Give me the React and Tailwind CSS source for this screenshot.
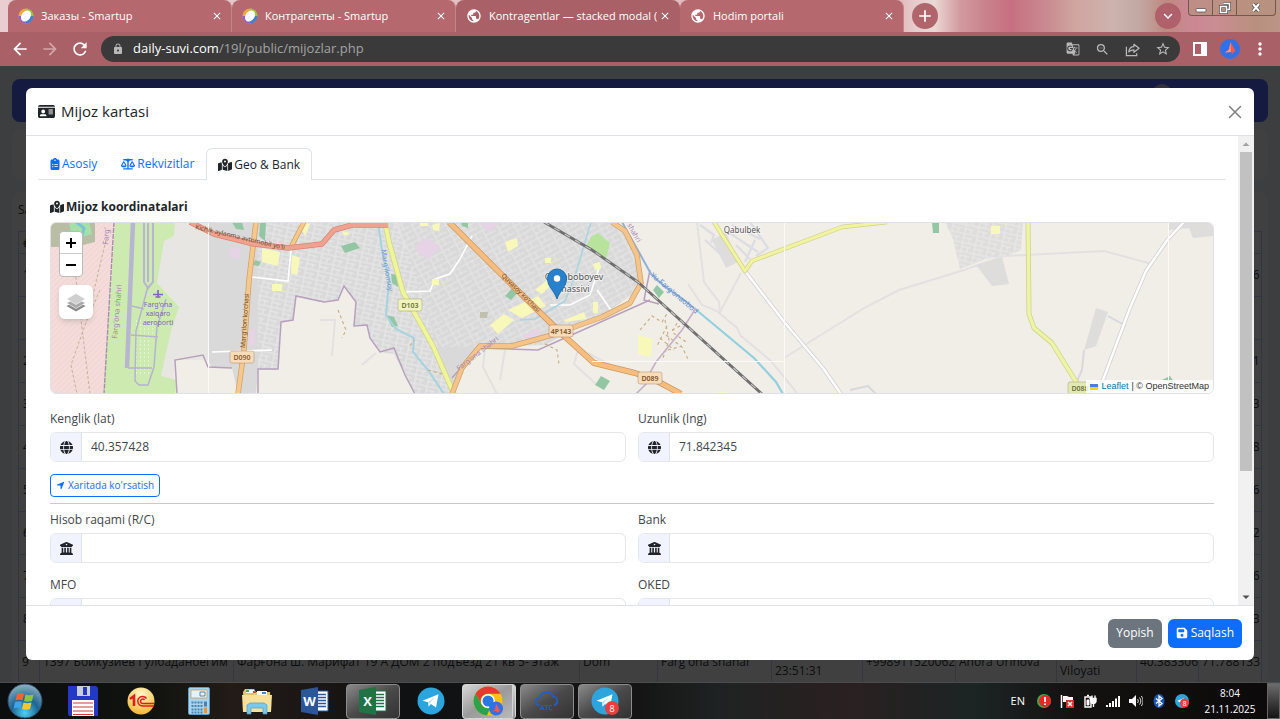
import { useState } from 'react'
import {
  FaIdCard,
  FaClipboardList,
  FaScaleBalanced,
  FaMapLocationDot,
  FaGlobe,
  FaBuildingColumns,
  FaLocationArrow,
  FaFloppyDisk
} from 'react-icons/fa6'
import {
  MdArrowBack,
  MdArrowForward,
  MdRefresh,
  MdLock,
  MdGTranslate,
  MdZoomOut,
  MdStarBorder,
  MdPublic,
  MdClose,
  MdAdd,
  MdExpandMore,
  MdMoreVert
} from 'react-icons/md'

const browserTabs = [
  { title: 'Заказы - Smartup', icon: 'smartup' },
  { title: 'Контрагенты - Smartup', icon: 'smartup' },
  { title: 'Kontragentlar — stacked modal (', icon: 'globe', active: true },
  { title: 'Hodim portali', icon: 'globe' }
]

const cardTabs = [
  { id: 'asosiy', label: 'Asosiy', Icon: FaClipboardList },
  { id: 'rekvizitlar', label: 'Rekvizitlar', Icon: FaScaleBalanced },
  { id: 'geo', label: 'Geo & Bank', Icon: FaMapLocationDot }
]

const rows = [
  { no: '1', lng: '71.788136' },
  { no: '', lng: '' },
  { no: '2', lng: '71.788131' },
  { no: '3', lng: '71.788133' },
  { no: '4', lng: '71.788138' },
  { no: '5', lng: '71.788136' },
  { no: '6', lng: '71.788132' },
  { no: '7', lng: '71.788136' },
  { no: '8', lng: '71.788133' }
]

function SmartupIcon() {
  return (
    <svg viewBox="0 0 16 16" className="size-4 shrink-0">
      <circle cx="8" cy="8" r="7.5" fill="#f3a93c" />
      <path d="M8 .5a7.5 7.5 0 0 1 7.5 7.5L8 8z" fill="#9bc53d" />
      <path d="M15.500 8A7.500 7.500 0 0 1 8 15.500L8 8z" fill="#3f7fd0" />
      <path d="M8 15.500A7.500 7.500 0 0 1 .5 8L8 8z" fill="#8c62c4" />
      <ellipse cx="8" cy="8" rx="4.500" ry="6" fill="#fff" transform="rotate(35 8 8)" />
    </svg>
  )
}

function BrowserTab({ tab }) {
  return (
    <div
      className={
        tab.active
          ? 'flex w-56 min-w-0 items-center rounded-t-lg bg-[#a96067] pr-[9px] pl-[10px]'
          : 'flex w-56 min-w-0 items-center rounded-t-lg border-r border-[#c48589] bg-[#b5686e] pr-2 pl-[10px]'
      }
    >
      {tab.icon === 'smartup' ? <SmartupIcon /> : <MdPublic className="size-4 shrink-0 text-white" />}
      <span className="ml-[7px] min-w-0 flex-1 overflow-hidden whitespace-nowrap text-[11px] text-white">{tab.title}</span>
      <button type="button" aria-label="Close tab" className="text-white">
        <MdClose className="size-3" />
      </button>
    </div>
  )
}

function WindowControls() {
  return (
    <div className="flex h-4 self-start rounded-b border border-t-0 border-[#6f5a52] bg-[#b8917f]/70">
      <button type="button" aria-label="Minimize" className="flex w-6 items-center justify-center border-r border-[#6f5a52]">
        <svg viewBox="0 0 12 12" className="size-3">
          <rect x="1" y="6.500" width="10" height="3.500" rx="1" fill="#fff" stroke="#555" strokeWidth=".8" />
        </svg>
      </button>
      <button type="button" aria-label="Restore" className="flex w-6 items-center justify-center border-r border-[#6f5a52]">
        <svg viewBox="0 0 12 12" className="size-3" fill="none">
          <path d="M4.500 1.500h6v6h-2M1.500 4.500h6v6h-6z" stroke="#555" strokeWidth="3" />
          <path d="M4.500 1.500h6v6h-2M1.500 4.500h6v6h-6z" stroke="#fff" strokeWidth="1.500" />
        </svg>
      </button>
      <button type="button" aria-label="Close window" className="flex w-[38px] items-center justify-center">
        <svg viewBox="0 0 12 12" className="size-3" fill="none">
          <path d="M3 2l6 7M9 2L3 9" stroke="#555" strokeWidth="3.500" />
          <path d="M3 2l6 7M9 2L3 9" stroke="#fff" strokeWidth="2" />
        </svg>
      </button>
    </div>
  )
}

function BrowserChrome() {
  return (
    <header className="shrink-0">
      <div className="flex h-8 bg-[linear-gradient(90deg,#e9cdd0_0%,#e2b5b9_70%,#e6cccb_71.500%,#ead9d4_73%,#d39a9f_75%,#c9828c_77%,#c76f80_79%,#c98d92_82%,#d0a5a0_84%,#cdb3ae_87%,#c2a8a3_89%,#bd8a80_91%,#cc8794_93%,#c98d92_95%,#b9907f_98%,#bb9585_100%)] pl-2">
        {browserTabs.map((tab) => (
          <BrowserTab key={tab.title} tab={tab} />
        ))}
        <button
          type="button"
          aria-label="New tab"
          className="ml-2 flex size-[26px] shrink-0 items-center justify-center self-center rounded-full bg-[#b0656c] text-white"
        >
          <MdAdd className="size-5" />
        </button>
        <button
          type="button"
          aria-label="Search tabs"
          className="mr-[7px] ml-auto flex size-[26px] shrink-0 items-center justify-center self-center rounded-full bg-[#b0606a] text-white"
        >
          <MdExpandMore className="size-[18px]" />
        </button>
        <div className="mr-1">
          <WindowControls />
        </div>
      </div>

      <div className="flex h-[34px] items-center bg-[#a96067] px-[10px] text-white">
        <button type="button" aria-label="Back" className="mr-[10px]">
          <MdArrowBack className="size-5" />
        </button>
        <button type="button" aria-label="Forward" className="mr-[10px] text-[#d3a5a8]">
          <MdArrowForward className="size-5" />
        </button>
        <button type="button" aria-label="Reload" className="mr-[11px]">
          <MdRefresh className="size-5" />
        </button>
        <div className="flex h-[26px] min-w-0 flex-1 items-center gap-[15px] rounded-full bg-[#3a3a3a] pr-[9px] pl-[11px] text-[#b9b9b9]">
          <MdLock className="size-3 shrink-0" />
          <p className="-ml-[6px] min-w-0 flex-1 truncate text-[13px] text-[#a3a3a3]">
            <span className="text-white">daily-suvi.com</span>/19l/public/mijozlar.php
          </p>
          <MdGTranslate className="size-[14px] shrink-0" />
          <MdZoomOut className="size-[15px] shrink-0" />
          <svg viewBox="0 0 16 16" className="size-[15px] shrink-0" fill="none" stroke="currentColor" strokeWidth="1.300">
            <path d="M1.500 5v9.500h11V12" />
            <path d="M4 10.500c.5-4 2.500-5.500 5.500-5.500V2.500L15 6.700 9.500 11V8.300C7 8.300 5.500 9 4 10.500z" strokeLinejoin="round" />
          </svg>
          <MdStarBorder className="size-4 shrink-0" />
        </div>
        <button type="button" aria-label="Side panel" className="ml-[13px]">
          <svg viewBox="0 0 14 14" className="size-[14px]">
            <path d="M0 0h14v14H0zM2 2v10h6V2z" fill="#fff" fillRule="evenodd" />
          </svg>
        </button>
        <button type="button" aria-label="Profile" className="ml-[13px]">
          <svg viewBox="0 0 20 20" className="size-5">
            <circle cx="10" cy="10" r="10" fill="#3070e8" />
            <path d="M10.500 3l5 8.500-3.500 3.500-1-2-6 .5 4-3z" fill="#f0594e" />
            <path d="M10.500 3l.5 10-6 .5 4-3z" fill="#ff9484" />
          </svg>
        </button>
        <button type="button" aria-label="Menu" className="ml-[10px]">
          <MdMoreVert className="size-5" />
        </button>
      </div>
    </header>
  )
}

function ClientsPage() {
  return (
    <div className="flex h-full flex-col overflow-hidden bg-[#3d3e40] px-3 pt-[13px] text-[12px] text-[#0c0d0e]">
      <div className="flex h-[43px] shrink-0 items-start justify-end rounded-lg bg-[#141a40] px-24">
        <div className="mt-[5px] size-5 rounded-full bg-[#35313a]" />
      </div>
      <div className="mt-2 h-[50px] shrink-0 rounded-lg bg-[#404040]" />
      <div className="mt-3 shrink-0 rounded-lg bg-[#404040] px-[6px]">
        <p className="h-[39px] pt-2 leading-5">Sa</p>
        <table className="w-full table-fixed border-collapse whitespace-nowrap">
          <colgroup>
            <col className="w-[21px]" />
            <col className="w-[194px]" />
            <col />
            <col className="w-[78px]" />
            <col className="w-[114px]" />
            <col className="w-[91px]" />
            <col className="w-[93px]" />
            <col className="w-[101px]" />
            <col className="w-20" />
            <col className="w-[62px]" />
            <col className="w-[63px]" />
          </colgroup>
          <thead>
            <tr className="h-[22px] border border-[#34363f]">
              <th className="pl-1 text-left leading-4">#</th>
              <th colSpan={10}></th>
            </tr>
          </thead>
          <tbody>
            {rows.map((row, i) => (
              <tr key={i} className="h-[43px] border border-[#34363f]">
                <td className="pl-1">{row.no}</td>
                <td colSpan={9}></td>
                <td className="pl-[3px]">{row.lng}</td>
              </tr>
            ))}
            <tr className="h-[43px] border border-[#34363f] [&>td]:border [&>td]:border-[#34363f] [&>td]:px-[3px] [&>td]:py-0">
              <td>9</td>
              <td>1397 Бойкузиев Гулбаданбегим</td>
              <td>Фарғона ш. Марифат 19 А ДОМ 2 подъезд 21 кв 5- этаж</td>
              <td>Dom</td>
              <td>Farg'ona shahar</td>
              <td className="leading-[17px]">2025-11-20<br />23:51:31</td>
              <td>+998911520062</td>
              <td>Anora Urinova</td>
              <td className="leading-[17px]">Farg'ona<br />Viloyati</td>
              <td>40.383306</td>
              <td>71.788133</td>
            </tr>
          </tbody>
        </table>
      </div>
    </div>
  )
}

function RoadLabel({ x, y, text, fill, color }) {
  return (
    <g>
      <rect x={x - 12} y={y - 6} width="24" height="12" rx="2" fill={fill} stroke={color} strokeOpacity=".3" />
      <text x={x} y={y + 3} textAnchor="middle" fontSize="7" fontWeight="600" fill={color}>{text}</text>
    </g>
  )
}

function Road({ d, width, fill, edge }) {
  return (
    <g fill="none" strokeLinejoin="round">
      <path d={d} stroke={edge} strokeWidth={width + 1.5} />
      <path d={d} stroke={fill} strokeWidth={width} />
    </g>
  )
}

function MapDrawing() {
  return (
    <svg
      viewBox="51 222 1162 172"
      preserveAspectRatio="xMidYMid slice"
      className="block h-full w-full font-['Noto_Sans',sans-serif]"
      role="img"
      aria-label="Xarita"
    >
      <defs>
        <pattern id="streetsA" width="13" height="9" patternUnits="userSpaceOnUse" patternTransform="rotate(12)">
          <path d="M0 1h13M4 1v8M10 5v4M4 5h9" stroke="#ececec" strokeWidth=".9" fill="none" />
        </pattern>
        <pattern id="streetsB" width="15" height="11" patternUnits="userSpaceOnUse" patternTransform="rotate(-28)">
          <path d="M0 1h15M3 1v10M9 1v6M3 7h12" stroke="#e9e9e9" strokeWidth=".9" fill="none" />
        </pattern>
        <pattern id="hatch" width="4" height="4" patternUnits="userSpaceOnUse" patternTransform="rotate(45)">
          <path d="M0 0v4" stroke="#efd0cf" strokeWidth="1.200" />
        </pattern>
        <pattern id="apron" width="4" height="4" patternUnits="userSpaceOnUse">
          <rect width="1" height="2" fill="#e2f3d6" />
        </pattern>
        <clipPath id="cityClip">
          <path d="M208 222H612L628 238 640 270 639 290 610 310 545 345 479 347 455 380 452 394H416L405 375 394 354 380 352 370 338 367 325 354 326 356 302 344 286 338 300 320 302 296 296 293 320 281 322 278 370H258L256 394H238L232 368H212L208 360z" />
        </clipPath>
      </defs>

      <rect x="51" y="222" width="1162" height="172" fill="#f1eee8" />
      <path d="M150 222h58v138l-33 0-2 34h-20z" fill="#e8e6e2" />
      <path d="M51 222h64l-11 172H51z" fill="#f3dcda" />
      <path d="M51 222h64l-11 172H51z" fill="url(#hatch)" />
      <path d="M51 222h44v20l-20 5H51z" fill="#b9bda4" />
      <path d="M69 222h20l3 12-20 6z" fill="#a5e0a8" />
      <path d="M76 222l8 6-2 8" stroke="#7cc4d4" strokeWidth="3" fill="none" />

      {/* airport */}
      <path d="M115 222h60l-1 14-10 5-7 42 22 24-8 24-10 45 16 4-2 14h-71z" fill="#cdebb0" />
      <path d="M136 320h18l-4 54h-16z" fill="url(#apron)" />
      <path d="M133 222l-6 146" stroke="#b8b5d0" strokeWidth="4.500" />
      <path d="M144 222v60l4 6 5-6V222M148 222v60" stroke="#b8b5d0" strokeWidth="2" fill="none" />
      <path d="M148 286l-12 45-1 50 4 4h9l6-18 3-40 9-28M132 306l12 3M131 335l27 2M128 368h24" stroke="#b5b3cf" strokeWidth="1.500" fill="none" />
      <path d="M106 240L87 320l-16 45 6 29M74 262l16 132M100 290l-13 30" stroke="#c9a98d" strokeWidth=".9" strokeDasharray="3 2" fill="none" />
      <path d="M114 222l-10 172" stroke="#a98dac" strokeWidth="1.400" strokeDasharray="5 1" />
      <path d="M158 290v7M153 294.500h10M155.500 297h5" stroke="#8461c4" strokeWidth="1.600" />
      <g fill="#8461c4" fontSize="7" textAnchor="middle">
        <text x="158" y="307">Farg'ona</text>
        <text x="158" y="316">xalqaro</text>
        <text x="158" y="325">aeroporti</text>
      </g>
      <g fill="#a97fb4" fontSize="7.500">
        <text transform="translate(117 339) rotate(-85)">Farg'ona shahri</text>
        <text transform="translate(108 245) rotate(-85)">Farg'</text>
      </g>

      {/* city blocks */}
      <g clipPath="url(#cityClip)">
        <rect x="200" y="222" width="450" height="172" fill="#d9d9da" />
        <path d="M258 222h140l55 172H258z" fill="url(#streetsA)" />
        <path d="M395 222h250v125H440z" fill="url(#streetsB)" />
        <path d="M404 292l26-1 5-12 15-5 10-15 12-23M252 277l36 4 4-40M212 352l60-2M550 305h20l20-10 10-30M597 290l14 20" stroke="#fff" strokeWidth="1.600" fill="none" />
        <path d="M414 248l12-10 14 8-12 14zM230 248h10v10h-10zM250 330l5-2v16l-6 2zM523 336l14-8 4 6-12 8zM478 222h22l-10 10z" fill="#e7d3e6" />
        <path d="M262 248l18 4-2 14-16-4zM292 255l8 3-3 17-6-2zM272 284h10v7h-10zM298 222l12 2-5 12zM505 242l12-4 1 8-10 6zM535 290l12-10 3 6-8 8zM508 310l30-14 8 10-24 12zM490 325l14-11 10 6-16 14zM564 320l20-8 2 7-20 3zM593 302h5v11h-5zM593 264l7-2 1 7-6 1zM545 258h6v5h-6zM432 279h7v6h-7zM432 225l8-2-1 8-6-1zM420 222h8v4h-8zM341 231l10 2-6 3z" fill="#f8f8bb" />
        <path d="M232 222h10l2 8-8-1zM260 223h6l-1 18-6-5zM255 260l6 2-2 4-6-1zM341 246l14-4 5 6-15 5zM391 274l6 1 1 12-6-4zM386 315l8 2 4 9-6 1zM505 296l8-9 7 3-9 10zM461 222h7v6l-6-2z" fill="#93c7a4" />
        <path d="M592 236l6-3 12 10-4 16-20-13z" fill="#b8e39c" />
        <path d="M480 312h8l-1 6h-7z" fill="#c0c0ae" />
      </g>
      <path d="M177 394l-2-34 28-5 5 12 24 1M258 394V369h20l3-47 12-2 3-24 28 6 14-2 6-14 12 16-2 24 13-1 3 13 10 14 14-4 11 27 10 19M452 378l26-30 60 2 112-50M650 270l-6 30 15 4" stroke="#b8a0bd" strokeWidth="1.500" fill="none" />

      {/* water */}
      <path d="M378 222l4 28 7 30-3 35 10 14 18 9-1 14 15 18 16 24" stroke="#a5d3df" strokeWidth="2" fill="none" />
      <path d="M591 222l-16 54-10 25-30 18-15 1" stroke="#a9d5e0" strokeWidth="1.600" fill="none" />
      <path d="M622 222l18 32 11 20 13 12 20 14 10 8" stroke="#8fb0d8" strokeWidth="2" fill="none" />
      <path d="M694 308l60 50 22 24 7 12" stroke="#92cfe0" strokeWidth="2.200" fill="none" />
      <text transform="translate(650 276) rotate(40)" fill="#5d8dc9" fontSize="7.500">Yu.Farg'onaobod</text>
      <text transform="translate(381 250) rotate(80)" fill="#6f97cf" fontSize="7">Marg'ilonsoy</text>

      {/* fields and minor roads */}
      <g fill="none" stroke="#e3e0e2" strokeWidth="2">
        <path d="M697 222l7 60 15 20 1 10 21-39M688 284l14 21 15 6 20 17 4 8 30 25 26 32M784 358l80-50 35-18 65-20 40-14 100-5 48 13M320 320h15l-3 36M362 365l14-12M485 347l-2 20 14 27M505 350l-5 30M578 350l-4 14 22 20M588 353l22 12" />
      </g>
      <g fill="#dedddc">
        <path d="M945 222h78l-2 28-16 6-20 3-25 10-7-30zM976 265l26-8 7 27-17 2zM1084 350l12-42 12 4-12 34zM1168 222h45v14l-20 2-4-10-20 2zM712 240l14-8 12 30-12 6z" />
      </g>
      <path d="M945 222h78l-2 28-16 6-20 3-25 10-7-30z" fill="url(#streetsA)" />
      <path d="M732 225l28 14M728 232l30 20M736 245l14 14M750 222l18 26-12 8M745 262l10-22M700 225l14 10-3 8M705 240l20 18" stroke="#dcdce2" strokeWidth="2.200" fill="none" />
      <path d="M1108 316l18 10M1084 350l-2 20-8 18M850 390l18-4 8 8" stroke="#d8d7dc" strokeWidth="2" fill="none" />
      <path d="M932 223h7v10h-6zM653 290l4-5 7 7-5 6zM595 385l6-9 9 5-6 9zM1162 380l8-4 4 6z" fill="#93c7a4" />
      <path d="M991 226h9v8h-9zM638 335l15 4-2 18-13-3zM835 388h5v6h-5zM718 392h6v2h-6z" fill="#f8f8bb" />
      <g fill="none" stroke="#c8aa7c" strokeWidth="1.100" strokeDasharray="3 3">
        <path d="M545 344l12 6 2 14M338 310l8 20-4 8M410 346l4-6M428 370l14 4M640 330l12-14 10 6 6-10M665 320l4 20-6 18M666 335l16 12 6 12M672 330l12-6M668 350l14-4M667 326l-10 20M680 318l-8 14 14 10M660 338l14 12" />
      </g>
      <path d="M696 308l-14 22-26 32-9 16M650 380l-14 14" stroke="#c7b0c8" strokeWidth="1.600" fill="none" />

      {/* roads */}
      <Road d="M745 271l40 52 38 45 18 26" width={2.5} fill="#fdfdfd" edge="#d0cfd2" />
      <Road d="M1184 222l-16 17-22 32-16 37-30 80" width={2.5} fill="#fdfdfd" edge="#d0cfd2" />
      <Road d="M714 222l31 49 7-10 90-34 45-5" width={3} fill="#f1f3a0" edge="#d0d486" />
      <Road d="M1028 222l1 92 5 14 18 15 26 42" width={3.5} fill="#eef3a5" edge="#ccd48c" />
      <Road d="M385 222l4 20 14 50 30 54 21 48" width={4} fill="#f0f59a" edge="#cdd488" />
      <Road d="M256 222l-7 58-5 70-6 44" width={4} fill="#f6c88c" edge="#cfa268" />
      <Road d="M304 222l-14 27" width={3.5} fill="#f6c88c" edge="#cfa268" />
      <Road d="M190 222l24 12 40 10 34 4 34-4 12-14 18-5h36" width={4} fill="#f0a290" edge="#d98572" />
      <Road d="M452 394l10-26 18-22h32l40-11 50-18 28-14 11-20-4-28-12-24-13-9" width={4} fill="#f4c48a" edge="#cfa268" />
      <Road d="M449 222l55 55 58 57 32 29 41 10 22 8 24 13" width={4.5} fill="#f6bd80" edge="#cf985c" />

      {/* railway */}
      <path d="M544 222l48 28 46 32 60 54 64 58" stroke="#6f6f6f" strokeWidth="2.800" fill="none" />
      <path d="M544 222l48 28 46 32 60 54 64 58" stroke="#c4c4c4" strokeWidth="1.200" strokeDasharray="6 6" fill="none" />

      {/* tile seams */}
      <path d="M208.500 222v172M784.500 222v172M1168.500 222v172M592 361.500h192" stroke="#fbfaf8" strokeWidth="1" />

      <g fontSize="6.500" fill="#6b4b32">
        <text transform="translate(195 229) rotate(13)">Kichik aylanma avtomobil yo'li</text>
        <text transform="translate(245 348) rotate(-86)">Marg'ilon ko'chasi</text>
        <text transform="translate(501 276) rotate(45)">Quvasoy ko'chasi</text>
      </g>
      <text transform="translate(459 371) rotate(-38)" fill="#a886b3" fontSize="7">Farg'ona shahri</text>
      <text transform="translate(627 225) rotate(60)" fill="#a886b3" fontSize="7">shahri</text>
      <RoadLabel x={410} y={305} text="D103" fill="#f0f3bd" color="#6c7035" />
      <RoadLabel x={242} y={357} text="D090" fill="#f8dcb8" color="#8a5a2b" />
      <RoadLabel x={561} y={331} text="4P143" fill="#f8dcb8" color="#7d4f27" />
      <RoadLabel x={650} y={378} text="D089" fill="#f8dcb8" color="#7d4f27" />
      <RoadLabel x={1080} y={388} text="D088" fill="#e3e9b5" color="#6c7035" />
      <g fill="#555" fontSize="8" textAnchor="middle" stroke="#fff" strokeOpacity=".5" strokeWidth="2" paintOrder="stroke">
        <text x="742" y="233">Qabulbek</text>
        <text x="574" y="280" fontSize="9">Qo'raboboyev</text>
        <text x="574" y="292" fontSize="9">massivi</text>
      </g>

      {/* marker */}
      <path d="M557 299c-3-9-9.500-12-9.500-20.500a9.500 9.500 0 0 1 19 0C566.500 287 560 290 557 299z" fill="#2a81cb" stroke="#1f6cab" strokeWidth="1" />
      <circle cx="557" cy="278.500" r="3.200" fill="#fff" />
    </svg>
  )
}

function ClientMap() {
  return (
    <div className="relative h-[172px] overflow-hidden rounded-md border border-[#dee2e6]">
      <MapDrawing />
      <div className="absolute top-2 left-2 flex flex-col gap-2">
        <div className="w-6 overflow-hidden rounded-sm border border-[#bbb] bg-white text-black">
          <button type="button" aria-label="Zoom in" className="flex h-[22px] w-full items-center justify-center border-b border-[#ccc]">
            <svg viewBox="0 0 10 10" className="size-[10px]">
              <path d="M5 0v10M0 5h10" stroke="currentColor" strokeWidth="2" />
            </svg>
          </button>
          <button type="button" aria-label="Zoom out" className="flex h-[22px] w-full items-center justify-center">
            <svg viewBox="0 0 10 10" className="size-[10px]">
              <path d="M0 5h10" stroke="currentColor" strokeWidth="2" />
            </svg>
          </button>
        </div>
        <button type="button" aria-label="Layers" className="flex size-[34px] items-center justify-center rounded-md bg-white shadow-md">
          <svg viewBox="0 0 20 20" className="size-5">
            <path d="M10 9l9.500 5-9.500 5.500L.5 14z" fill="#8a8a8a" />
            <path d="M10 6l9.500 5-9.500 5.500L.5 11z" fill="#aaa" stroke="#fff" strokeWidth=".6" />
            <path d="M10 1.500L19.500 7 10 12.500.5 7z" fill="#cfcfcf" stroke="#fff" strokeWidth=".6" />
          </svg>
        </button>
      </div>
      <div className="absolute right-0 bottom-0 flex items-center gap-[3px] bg-white/80 px-1 font-['Liberation_Sans',sans-serif] text-[9px] leading-[13px] text-[#333]">
        <svg viewBox="0 0 8 6" className="h-[6px] w-2">
          <path d="M0 0h8v3H0z" fill="#4c7be1" />
          <path d="M0 3h8v3H0z" fill="#ffd500" />
        </svg>
        <a href="#leaflet" className="text-[#0078a8]">Leaflet</a>
        <span>| © OpenStreetMap</span>
      </div>
    </div>
  )
}

function Field({ id, label, Icon, value }) {
  return (
    <div>
      <label htmlFor={id} className="mb-1 block text-[12px] leading-[18px] text-[#42474c]">{label}</label>
      <div className="flex h-[30px] overflow-hidden rounded-md border border-[#e5e7eb]">
        <span className="flex w-[31px] shrink-0 items-center justify-center border-r border-[#dfe3ee] bg-[#f1f4fe] text-[#212529]">
          <Icon className="size-[13px]" />
        </span>
        <input id={id} type="text" defaultValue={value} className="min-w-0 flex-1 px-[9px] text-[12px] text-[#42474c] outline-none" />
      </div>
    </div>
  )
}

function ClientModal() {
  const [activeTab, setActiveTab] = useState('geo')

  return (
    <div role="dialog" aria-label="Mijoz kartasi" className="flex h-full flex-col overflow-hidden rounded-md bg-white text-[#212529]">
      <div className="flex h-12 shrink-0 items-center justify-between border-b border-[#dee2e6] px-3">
        <h5 className="flex items-center gap-[6px] text-[15px]">
          <FaIdCard className="size-[17px]" />
          Mijoz kartasi
        </h5>
        <button type="button" aria-label="Yopish">
          <svg viewBox="0 0 14 14" className="size-[14px]" fill="none">
            <path d="M1.500 1.500l11 11M12.500 1.500l-11 11" stroke="#7f7f7f" strokeWidth="1.500" strokeLinecap="round" />
          </svg>
        </button>
      </div>

      <div className="flex min-h-0 flex-1">
        <div className="min-w-0 flex-1 overflow-hidden p-3">
          <div role="tablist" className="flex border-b border-[#dee2e6]">
            {cardTabs.map(({ id, label, Icon }) => (
              <button
                key={id}
                type="button"
                role="tab"
                aria-selected={activeTab === id}
                onClick={() => setActiveTab(id)}
                className={
                  activeTab === id
                    ? '-mb-px flex h-8 items-center gap-[2px] rounded-t-md border border-b-0 border-[#dee2e6] bg-white px-[11px] text-[12px] text-[#212529]'
                    : '-mb-px flex h-8 items-center gap-[2px] border border-transparent px-[11px] text-[12px] text-[#0d6efd]'
                }
              >
                <Icon className={id === 'asosiy' ? 'h-3 w-[10px]' : 'size-[14px]'} />
                {label}
              </button>
            ))}
          </div>

          <div className="px-3 pt-[18px]">
            <h6 className="mb-[6px] flex items-center gap-[2px] text-[12px] leading-[18px] font-bold">
              <FaMapLocationDot className="size-[14px]" />
              Mijoz koordinatalari
            </h6>
            <ClientMap />

            <div className="mt-4 grid grid-cols-2 gap-x-3">
              <Field id="lat" label="Kenglik (lat)" Icon={FaGlobe} value="40.357428" />
              <Field id="lng" label="Uzunlik (lng)" Icon={FaGlobe} value="71.842345" />
            </div>

            <button
              type="button"
              className="mt-3 flex h-[23px] items-center gap-[3px] rounded border border-[#0d6efd] px-[5px] text-[10px] text-[#0d6efd]"
            >
              <FaLocationArrow className="size-[9px]" />
              Xaritada ko'rsatish
            </button>
            <hr className="mt-[6px] border-[#c8c9ca]" />

            <div className="mt-[7px] grid grid-cols-2 gap-x-3 gap-y-[13px]">
              <Field id="account" label="Hisob raqami (R/C)" Icon={FaBuildingColumns} />
              <Field id="bank" label="Bank" Icon={FaBuildingColumns} />
              <Field id="mfo" label="MFO" Icon={FaBuildingColumns} />
              <Field id="oked" label="OKED" Icon={FaBuildingColumns} />
            </div>
          </div>
        </div>

        <div className="flex w-4 shrink-0 flex-col items-center bg-[#f1f1f1]">
          <svg viewBox="0 0 16 16" className="size-4 shrink-0">
            <path d="M4.500 10L8 6.500l3.500 3.500z" fill="#a3a3a3" />
          </svg>
          <div className="w-3 grow-[73] bg-[#c1c1c1]" />
          <div className="grow-[27]" />
          <svg viewBox="0 0 16 16" className="size-4 shrink-0">
            <path d="M4.500 6.500L8 10l3.500-3.500z" fill="#505050" />
          </svg>
        </div>
      </div>

      <div className="flex h-[55px] shrink-0 items-center justify-end gap-[6px] border-t border-[#dee2e6] px-3">
        <button type="button" className="h-[29px] rounded-md bg-[#6c757d] px-2 text-[12px] text-white">Yopish</button>
        <button type="button" className="flex h-[29px] items-center gap-[3px] rounded-md bg-[#0d6efd] px-2 text-[12px] text-white">
          <FaFloppyDisk className="size-3" />
          Saqlash
        </button>
      </div>
    </div>
  )
}

function TelegramIcon({ badge }) {
  return (
    <svg viewBox="0 0 28 28" className="size-7">
      <circle cx="14" cy="14" r="13.500" fill="#2ca5df" />
      <path d="M5.500 13.800L21.500 7.300 19 20.500l-5-3.500-2.500 2.500-.4-4.200z" fill="#fff" />
      <path d="M11.100 15.300L18 10l-5.500 6.500-1 3z" fill="#c5dcea" />
      {badge && (
        <g>
          <circle cx="21" cy="21" r="7" fill="#ea3d3d" />
          <text x="21" y="24.500" textAnchor="middle" fontSize="9" fill="#fff">{badge}</text>
        </g>
      )}
    </svg>
  )
}

function StartOrb() {
  return (
    <svg viewBox="0 0 36 36" className="size-9">
      <defs>
        <radialGradient id="orb" cx=".5" cy=".85" r=".8">
          <stop offset="0" stopColor="#4fd0f2" />
          <stop offset=".5" stopColor="#1c6494" />
          <stop offset="1" stopColor="#86a9bf" />
        </radialGradient>
      </defs>
      <circle cx="18" cy="18" r="17" fill="url(#orb)" stroke="#2c4b60" />
      <path d="M10 11c3-1.500 5-1 7 0l-1.500 6.500c-2.500-1-4.500-1-7 0z" fill="#f0652f" />
      <path d="M18.500 11.500c2.500 1 5 1 8 0L25 18c-3 1-5.500 1-8 0z" fill="#8cc63e" />
      <path d="M8 19c2.500-1 5-1 7 0l-1.500 6.500c-2-1-4.500-1-7 0z" fill="#3fa4e8" />
      <path d="M16.500 19.500c2.500 1 5 1 8 0L23 26c-3 1-5.500 1-8 0z" fill="#fdc62f" />
    </svg>
  )
}

function FloppyIcon() {
  return (
    <svg viewBox="0 0 30 30" className="size-[30px]">
      <path d="M0 0h28l2 2v28H1l-1-2z" fill="#2438c8" />
      <path d="M9 0h13v10H9z" fill="#c9ced8" />
      <path d="M15 1h4v8h-4z" fill="#2438c8" />
      <path d="M4 14h22v16H4z" fill="#fff" />
      <path d="M5 17h20M5 21h20M5 25h20M5 28.500h20" stroke="#d03a3a" strokeWidth="1.200" />
    </svg>
  )
}

function OneCIcon() {
  return (
    <svg viewBox="0 0 28 28" className="size-7">
      <defs>
        <radialGradient id="gold" cx=".5" cy=".25" r=".8">
          <stop offset="0" stopColor="#fff7c8" />
          <stop offset="1" stopColor="#f5b52c" />
        </radialGradient>
      </defs>
      <circle cx="14" cy="14" r="13.500" fill="url(#gold)" />
      <path d="M3 12l4-3v10" stroke="#dc1f1f" strokeWidth="2.600" fill="none" />
      <path d="M19.500 11.500a4.800 4.800 0 1 0-4 7.500H27M17.500 13a2.200 2.200 0 1 0-2 3.500H27" stroke="#dc1f1f" strokeWidth="1.500" fill="none" />
    </svg>
  )
}

function CalculatorIcon() {
  return (
    <svg viewBox="0 0 22 28" className="h-7 w-[22px]">
      <rect x=".5" y=".5" width="21" height="27" rx="1.500" fill="#a8d4ee" stroke="#5e9cc4" />
      <path d="M3 3h16v8H3z" fill="#e4f3fb" stroke="#d89a50" strokeWidth=".8" />
      <path d="M12 5h5v4h-5z" fill="none" stroke="#5c86a6" />
      <path d="M3.500 15.500h11M3.500 19h11M3.500 22.500h11M3.500 25.500h11" stroke="#4d83ab" strokeWidth="2" strokeDasharray="2 1" />
      <path d="M16 14.500h3v5h-3z" fill="#4d83ab" />
      <path d="M16 20.500h3v5.500h-3z" fill="#ef9431" />
    </svg>
  )
}

function ExplorerIcon() {
  return (
    <svg viewBox="0 0 30 28" className="h-7 w-[30px]">
      <path d="M1 5l2-3h9l2 3h14l1 18-2 2H2z" fill="#e6c766" />
      <path d="M4 3h8v3H4zM15 4h10v4H15z" fill="#fff" />
      <path d="M4 3h3v2H4z" fill="#4fae4a" />
      <path d="M11 4h3v2h-3z" fill="#d84a36" />
      <path d="M20 5h4v2h-4z" fill="#3d8fd0" />
      <path d="M0 8h30l-1 17H1z" fill="#f6e19b" />
      <path d="M5 27v-9l3-2h14l3 2v9h-4v-6H9v6z" fill="#7cc8ea" stroke="#4b9fc8" strokeWidth=".7" />
    </svg>
  )
}

function OfficeIcon({ letter, color }) {
  return (
    <svg viewBox="0 0 28 28" className="size-7">
      <path d="M14 4h13v20H14z" fill="#fff" stroke={color} />
      <path d="M17 7.500h8M17 10.500h8M17 13.500h8M17 16.500h8M17 19.500h8" stroke={color} strokeWidth="1.300" />
      <path d="M0 3l17-3v28L0 25z" fill={color} />
      <text x="8.500" y="19" textAnchor="middle" fontSize="13" fontWeight="700" fill="#fff">{letter}</text>
    </svg>
  )
}

function ChromeIcon() {
  return (
    <svg viewBox="0 0 30 30" className="size-[30px]">
      <circle cx="15" cy="15" r="14.500" fill="#fbc116" />
      <path d="M2.500 7.700A14.500 14.500 0 0 1 27.600 7.800H15a7.200 7.200 0 0 0-6.300 10.800z" fill="#e33b2e" />
      <path d="M2.500 7.700l6.200 10.900a7.200 7.200 0 0 0 8.400 3.300L14 29.500A14.500 14.500 0 0 1 2.500 7.700z" fill="#2ba24c" />
      <circle cx="15" cy="15" r="7" fill="#fff" />
      <circle cx="15" cy="15" r="5.500" fill="#2a78e4" />
      <circle cx="23" cy="22.500" r="7" fill="#3070e8" />
      <path d="M23 17.500l4 7-3 2.500-1-2-4 .5 3-2z" fill="#f0594e" />
    </svg>
  )
}

function AtcIcon() {
  return (
    <svg viewBox="0 0 24 20" className="h-5 w-6">
      <path d="M5 14.500H4.500a4 4 0 0 1 .3-8A7 7 0 0 1 18 5.500a4.600 4.600 0 0 1 1 9" fill="none" stroke="#1f5fc4" strokeWidth="1.700" />
      <text x="11.500" y="19" textAnchor="middle" fontSize="6.500" fontWeight="700" fill="#1f5fc4">ATC</text>
    </svg>
  )
}

const taskbarItems = [
  { name: 'Total Commander', icon: <FloppyIcon /> },
  { name: '1C', icon: <OneCIcon /> },
  { name: 'Calculator', icon: <CalculatorIcon /> },
  { name: 'Explorer', icon: <ExplorerIcon /> },
  { name: 'Word', icon: <OfficeIcon letter="W" color="#2b579a" /> },
  { name: 'Excel', icon: <OfficeIcon letter="X" color="#217346" />, state: 'open' },
  { name: 'Telegram', icon: <TelegramIcon /> },
  { name: 'Chrome', icon: <ChromeIcon />, state: 'active' },
  { name: 'ATC', icon: <AtcIcon />, state: 'open' },
  { name: 'Telegram chats', icon: <TelegramIcon badge="8" />, state: 'open' }
]

const itemStyles = {
  idle: 'flex h-[35px] w-[54px] items-center justify-center',
  open: 'flex h-[35px] w-[54px] items-center justify-center rounded-sm border border-[#8d8d8d] bg-linear-to-br from-[#8b8b8b] via-[#4a4a4a] to-[#333]',
  active: 'flex h-[35px] w-[54px] items-center justify-center rounded-sm border border-r-4 border-double border-[#d5d5d5] bg-linear-to-br from-[#d8d8d8] via-[#9a9a9a] to-[#b9b9b9]'
}

function TrayIcons() {
  return (
    <div className="flex items-center gap-[9px]">
      <svg viewBox="0 0 14 14" className="size-[14px]">
        <circle cx="7" cy="7" r="7" fill="#47a447" />
        <circle cx="8" cy="7" r="6" fill="#e02a26" />
        <path d="M8 3v5M8 9.500v1.500" stroke="#fff" strokeWidth="1.800" />
      </svg>
      <svg viewBox="0 0 14 14" className="size-[14px]">
        <path d="M1.500 1v13" stroke="#fff" strokeWidth="1.500" />
        <path d="M3 2h4l2 1h4v6H9L7 8H3z" fill="#fff" />
        <path d="M6 6h8v8H6z" fill="#d9302a" />
        <path d="M8 8l4 4M12 8l-4 4" stroke="#fff" strokeWidth="1.500" />
      </svg>
      <svg viewBox="0 0 14 14" className="size-[14px]" fill="none" stroke="#fff">
        <path d="M2 3h6v10H2z" strokeWidth="1.400" />
        <path d="M4 1.500h2" strokeWidth="1.500" />
        <path d="M4 6h2v5H4z" fill="#fff" />
        <path d="M7 4.500h6V7a2.500 2.500 0 0 1-5 0zM9 1.500v3M12 1.500v3M10.500 9v4" strokeWidth="1.400" fill="#fff" />
      </svg>
      <svg viewBox="0 0 14 14" className="size-[14px]" fill="#fff">
        <path d="M0 11h2v2H0zM3 9h2v4H3zM6 7h2v6H6zM9 4.500h2V13H9zM12 2h2v11h-2z" />
      </svg>
      <svg viewBox="0 0 14 14" className="size-[14px]" fill="none">
        <path d="M0 5h3l4-4v12L3 9H0z" fill="#fff" />
        <path d="M8.500 5c1 1.200 1 2.800 0 4M10.500 3.500c1.800 2 1.800 5 0 7M12.300 2c2.300 3 2.300 7 0 10" stroke="#ddd" />
      </svg>
      <svg viewBox="0 0 14 14" className="size-[14px]" fill="none">
        <ellipse cx="7" cy="7" rx="5.500" ry="7" fill="#1c56b0" />
        <path d="M4 4.500l6 5-3 2.500V2l3 2.500-6 5" stroke="#fff" strokeWidth="1.200" />
      </svg>
      <svg viewBox="0 0 14 14" className="size-[14px]">
        <circle cx="7" cy="7" r="7" fill="#2ca5df" />
        <path d="M2 7l7-3-2 5z" fill="#fff" />
        <circle cx="9.500" cy="9" r="4.500" fill="#ea3d3d" />
        <text x="9.500" y="11.500" textAnchor="middle" fontSize="6.500" fill="#fff">8</text>
      </svg>
    </div>
  )
}

function Taskbar() {
  return (
    <footer className="flex h-[37px] shrink-0 items-center border-t border-[#4c4d4f] bg-[linear-gradient(90deg,#0b0d0e_0%,#11130f_12%,#221b17_18%,#101112_32%,#151515_50%,#1f2222_56%,#2a2021_66%,#1c2424_76%,#141111_84%,#0b0909_100%)]">
      <button type="button" aria-label="Start" className="mr-[6px] flex w-[50px] items-center justify-center">
        <StartOrb />
      </button>
      <div className="flex gap-1">
        {taskbarItems.map((item) => (
          <button key={item.name} type="button" aria-label={item.name} className={itemStyles[item.state || 'idle']}>
            {item.icon}
          </button>
        ))}
      </div>
      <span className="mr-3 ml-auto text-[11px] text-white">EN</span>
      <TrayIcons />
      <div className="ml-1 w-[74px] text-center text-[10px] leading-4 text-white">
        <p>8:04</p>
        <p>21.11.2025</p>
      </div>
      <button type="button" aria-label="Show desktop" className="h-full w-[13px] border border-[#666] bg-linear-to-b from-[#6d6d6d] to-[#151515]" />
    </footer>
  )
}

export default function App() {
  return (
    <div className="flex h-screen flex-col overflow-hidden font-['Open_Sans','Noto_Sans',sans-serif]">
      <BrowserChrome />
      <main className="relative min-h-0 flex-1">
        <ClientsPage />
        <div className="absolute inset-0 px-[26px] py-[22px]">
          <ClientModal />
        </div>
      </main>
      <Taskbar />
    </div>
  )
}
